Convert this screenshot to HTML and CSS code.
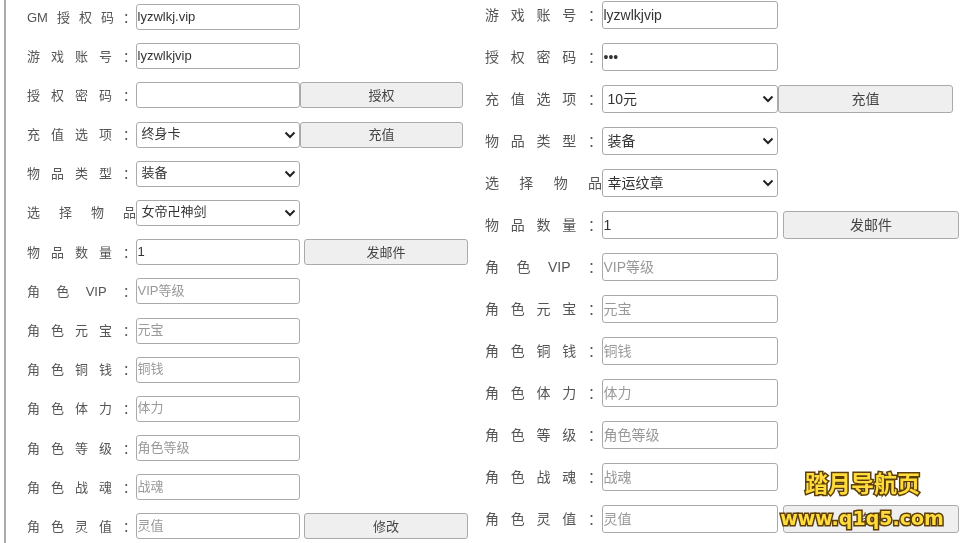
FILE: index.html
```html
<!DOCTYPE html>
<html lang="zh-CN">
<head>
<meta charset="utf-8">
<title>GM</title>
<link rel="stylesheet" href="styles.css">
</head>
<body>
<main class="page">
  <section class="col col-left">
    <div class="row"><label class="lbl">GM授权码：</label><input class="fld" value="lyzwlkj.vip"></div>
    <div class="row"><label class="lbl">游戏账号：</label><input class="fld" value="lyzwlkjvip"></div>
    <div class="row"><label class="lbl">授权密码：</label><input class="fld" type="password"><button class="btn">授权</button></div>
    <div class="row"><label class="lbl">充值选项：</label><select class="fld"><option>终身卡</option></select><button class="btn">充值</button></div>
    <div class="row"><label class="lbl">物品类型：</label><select class="fld"><option>装备</option></select></div>
    <div class="row"><label class="lbl">选择物品</label><select class="fld"><option>女帝卍神剑</option></select></div>
    <div class="row"><label class="lbl">物品数量：</label><input class="fld" value="1"><button class="btn btn-gap">发邮件</button></div>
    <div class="row"><label class="lbl">角色VIP：</label><input class="fld" placeholder="VIP等级"></div>
    <div class="row"><label class="lbl">角色元宝：</label><input class="fld" placeholder="元宝"></div>
    <div class="row"><label class="lbl">角色铜钱：</label><input class="fld" placeholder="铜钱"></div>
    <div class="row"><label class="lbl">角色体力：</label><input class="fld" placeholder="体力"></div>
    <div class="row"><label class="lbl">角色等级：</label><input class="fld" placeholder="角色等级"></div>
    <div class="row"><label class="lbl">角色战魂：</label><input class="fld" placeholder="战魂"></div>
    <div class="row"><label class="lbl">角色灵值：</label><input class="fld" placeholder="灵值"><button class="btn btn-gap">修改</button></div>
  </section>
  <section class="col col-right">
    <div class="row"><label class="lbl">游戏账号：</label><input class="fld" value="lyzwlkjvip"></div>
    <div class="row"><label class="lbl">授权密码：</label><input class="fld" type="password" value="123"></div>
    <div class="row"><label class="lbl">充值选项：</label><select class="fld"><option>10元</option></select><button class="btn">充值</button></div>
    <div class="row"><label class="lbl">物品类型：</label><select class="fld"><option>装备</option></select></div>
    <div class="row"><label class="lbl">选择物品</label><select class="fld"><option>幸运纹章</option></select></div>
    <div class="row"><label class="lbl">物品数量：</label><input class="fld" value="1"><button class="btn btn-gap">发邮件</button></div>
    <div class="row"><label class="lbl">角色VIP：</label><input class="fld" placeholder="VIP等级"></div>
    <div class="row"><label class="lbl">角色元宝：</label><input class="fld" placeholder="元宝"></div>
    <div class="row"><label class="lbl">角色铜钱：</label><input class="fld" placeholder="铜钱"></div>
    <div class="row"><label class="lbl">角色体力：</label><input class="fld" placeholder="体力"></div>
    <div class="row"><label class="lbl">角色等级：</label><input class="fld" placeholder="角色等级"></div>
    <div class="row"><label class="lbl">角色战魂：</label><input class="fld" placeholder="战魂"></div>
    <div class="row"><label class="lbl">角色灵值：</label><input class="fld" placeholder="灵值"><button class="btn btn-gap">修改</button></div>
  </section>
</main>
<aside class="mark">
  <div class="mark-title">踏月导航页</div>
  <div class="mark-url">www.q1q5.com</div>
</aside>
</body>
</html>
```
FILE: styles.css
```css
* { box-sizing: border-box; }
html, body { margin: 0; height: 543px; overflow: hidden; background: #fff; }
body { font-family: "Liberation Sans", "Noto Sans CJK SC", sans-serif; color: #444; position: relative; }
.page { display: flex; align-items: flex-start; height: 543px; padding-left: 4px; filter: blur(0.35px); }

.col { display: flex; flex-direction: column; }
.col-left { width: 476px; height: 543px; border-left: 2px solid #aaa; padding: 4px 0 0 21px; gap: 13.2px; font-size: 13px; }
.col-right { padding: 0.6px 0 0 5px; gap: 14.05px; font-size: 14px; }

.row { display: flex; align-items: stretch; }
.col-left .row { height: 26px; }
.col-right .row { height: 28px; }

.lbl { display: block; align-self: center; text-align: justify; text-align-last: justify; color: #555; margin-bottom: 2px; }
.col-left .lbl { width: 109px; }
.col-right .lbl { width: 117px; }

.fld { font: inherit; color: #333; background: #fff; border: 1.5px solid #aaa; border-radius: 3px; padding: 0 0.5px 2px; margin: 0; outline: none; }
.col-right .fld { padding-bottom: 0; }
.fld::placeholder { color: #999; }
select.fld {
  appearance: none;
  padding: 0 16px 2px 4.5px;
  background: #fff url("data:image/svg+xml;utf8,<svg xmlns='http://www.w3.org/2000/svg' width='12' height='8' viewBox='0 0 12 8'><path d='M1.5 1.5 L6 6 L10.5 1.5' fill='none' stroke='%23222' stroke-width='2'/></svg>") no-repeat right 3px center;
}
.col-right select.fld { padding-bottom: 0; }
.col-left .fld { width: 164px; }
.col-right .fld { width: 176px; }

.btn { font: inherit; color: #444; background: #efefef; border: 1.5px solid #aaa; border-radius: 3px; padding: 0 0 2px; margin: 0; }
.col-left .btn { width: 163px; }
.col-right .btn { width: 175px; }
.col-left .btn-gap { width: 164px; margin-left: 4px; }
.col-right .btn-gap { width: 176px; margin-left: 5px; }

.mark { position: absolute; left: 780px; top: 470px; width: 165px; text-align: center; font-family: "DejaVu Sans", "Noto Sans CJK SC", sans-serif; font-weight: 700; color: #ffdc3c; paint-order: stroke fill; -webkit-text-stroke: 3px #5b3d05; pointer-events: none; filter: blur(0.3px); }
.mark-title { font-size: 23px; line-height: 28px; }
.mark-url { font-size: 19px; line-height: 24px; margin-top: 8px; margin-left: -1px; white-space: nowrap; }
```
